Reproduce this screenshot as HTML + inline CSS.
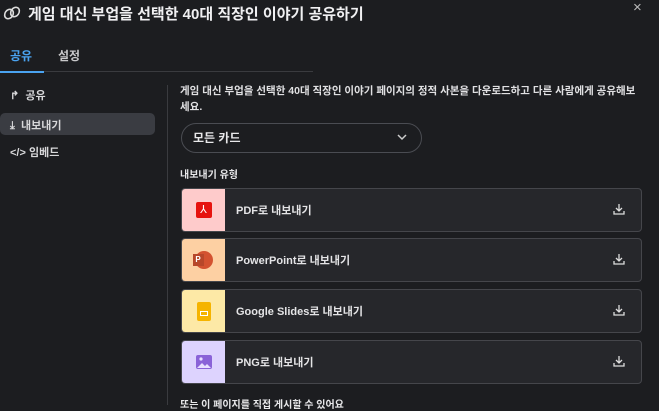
<!DOCTYPE html>
<html><head><meta charset="utf-8"><style>
*{margin:0;padding:0;box-sizing:border-box}
body{width:659px;height:405px;overflow:hidden;background:#1c1d20;color:#e8e8ea;font-family:"Liberation Sans","Noto Sans CJK KR",sans-serif;position:relative}
.a{position:absolute}
.title{left:28px;top:3px;font-size:15px;font-weight:bold;color:#f0f0f2}
.tab{top:47px;font-size:12px;font-weight:bold}
.side{left:10px;font-size:11px;font-weight:bold;color:#d8d8da}
.card{left:181px;width:461px;height:44px;border:1px solid #45464b;border-radius:4px;background:#26272b;overflow:hidden}
.ic{position:absolute;left:0;top:0;width:43px;height:100%;display:flex;align-items:center;justify-content:center}
.lab{position:absolute;left:54px;top:13px;font-size:11px;font-weight:bold;color:#e4e4e6}
.dl{position:absolute;right:16px;top:14px}
</style></head><body>
<svg class="a" style="left:3px;top:5px" width="18" height="16" viewBox="0 0 18 16" fill="none" stroke="#ddd" stroke-width="1.6"><ellipse cx="6" cy="9" rx="4" ry="5" transform="rotate(35 6 9)"/><ellipse cx="12" cy="7" rx="4" ry="5" transform="rotate(35 12 7)"/></svg>
<div class="a title">게임 대신 부업을 선택한 40대 직장인 이야기 공유하기</div>
<div class="a" style="left:633px;top:-1px;font-size:15px;color:#bbb">×</div>
<div class="a tab" style="left:10px;color:#4aa3f0">공유</div>
<div class="a tab" style="left:58px;color:#c8c8ca">설정</div>
<div class="a" style="left:0;top:71px;width:313px;height:1px;background:#3a3b3f"></div>
<div class="a" style="left:0;top:71px;width:44px;height:2px;background:#4aa3f0"></div>
<div class="a side" style="top:87px">↱&nbsp; 공유</div>
<div class="a" style="left:0;top:113px;width:155px;height:22px;border-radius:5px;background:#3a3c42"></div>
<div class="a side" style="top:117px">⤓&nbsp; 내보내기</div>
<div class="a side" style="top:144px">&lt;/&gt; 임베드</div>
<div class="a" style="left:167px;top:85px;width:1px;height:320px;background:#3a3b3f"></div>
<div class="a" style="left:180px;top:83px;width:462px;font-size:10.5px;font-weight:bold;line-height:16px;color:#e0e0e2">게임 대신 부업을 선택한 40대 직장인 이야기 페이지의 정적 사본을 다운로드하고 다른 사람에게 공유해보세요.</div>
<div class="a" style="left:181px;top:123px;width:241px;height:30px;border:1px solid #4a4c52;border-radius:15px"></div>
<div class="a" style="left:193px;top:129px;font-size:12px;font-weight:bold">모든 카드</div>
<svg class="a" style="left:396px;top:133px" width="12" height="8" viewBox="0 0 12 8" fill="none" stroke="#ccc" stroke-width="1.5"><path d="M2 2l4 4 4-4"/></svg>
<div class="a" style="left:180px;top:166px;font-size:10px;font-weight:bold">내보내기 유형</div>

<div class="a card" style="top:188px"><div class="ic" style="background:#fecbcb"><div style="width:16px;height:16px;background:#e6130f;border-radius:2px;color:#fff;font-size:11px;text-align:center;line-height:16px">⅄</div></div><div class="lab">PDF로 내보내기</div><svg class="dl" width="12" height="12" viewBox="0 0 12 12" fill="none" stroke="#ddd" stroke-width="1.3"><path d="M6 1v7M3 5l3 3 3-3M1 8v3h10V8"/></svg></div>
<div class="a card" style="top:238px"><div class="ic" style="background:#fdd0a3"><div style="width:18px;height:18px;border-radius:50%;background:#d35230;position:relative"><div style="position:absolute;left:-2px;top:3px;width:11px;height:12px;background:#b7472a;color:#fff;font-size:8px;text-align:center;line-height:12px;font-weight:bold">P</div></div></div><div class="lab">PowerPoint로 내보내기</div><svg class="dl" width="12" height="12" viewBox="0 0 12 12" fill="none" stroke="#ddd" stroke-width="1.3"><path d="M6 1v7M3 5l3 3 3-3M1 8v3h10V8"/></svg></div>
<div class="a card" style="top:289px"><div class="ic" style="background:#fde9a6"><div style="width:14px;height:19px;background:#f5b400;border-radius:2px;position:relative"><div style="position:absolute;left:3px;top:9px;width:8px;height:5px;border:1.5px solid #fff"></div></div></div><div class="lab">Google Slides로 내보내기</div><svg class="dl" width="12" height="12" viewBox="0 0 12 12" fill="none" stroke="#ddd" stroke-width="1.3"><path d="M6 1v7M3 5l3 3 3-3M1 8v3h10V8"/></svg></div>
<div class="a card" style="top:340px"><div class="ic" style="background:#ddd3fe"><svg width="18" height="16" viewBox="0 0 18 16"><rect x="1" y="1" width="16" height="14" rx="2" fill="#8a63d8"/><circle cx="6" cy="5" r="1.6" fill="#e8e0ff"/><path d="M2 14l5-5 3 3 2-2 4 4z" fill="#e8e0ff"/></svg></div><div class="lab">PNG로 내보내기</div><svg class="dl" width="12" height="12" viewBox="0 0 12 12" fill="none" stroke="#ddd" stroke-width="1.3"><path d="M6 1v7M3 5l3 3 3-3M1 8v3h10V8"/></svg></div>
<div class="a" style="left:180px;top:396px;font-size:10px;font-weight:bold">또는 이 페이지를 직접 게시할 수 있어요</div>
</body></html>
